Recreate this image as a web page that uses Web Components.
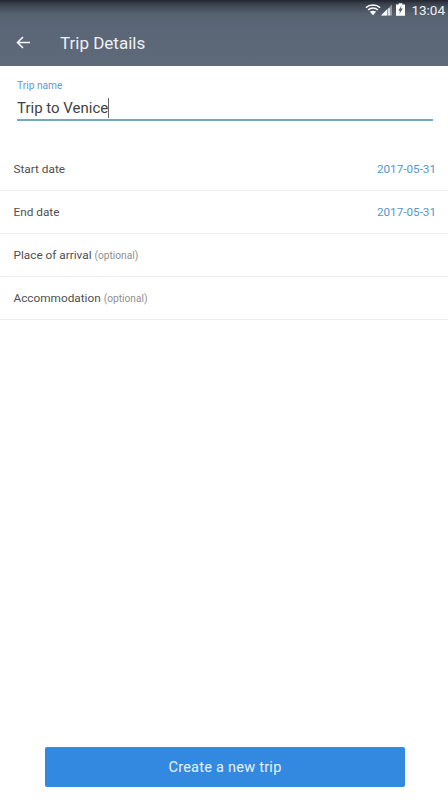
<!DOCTYPE html>
<html>
<head>
<meta charset="utf-8">
<title>Trip Details</title>
<style>
  html, body { margin: 0; padding: 0; height: 100%; }
  body { width: 448px; height: 800px; overflow: hidden; background: #fff; font-family: Roboto, "Liberation Sans", sans-serif; display: flex; flex-direction: column; }
</style>
</head>
<body>
<app-header title="Trip Details"></app-header>
<name-field label="Trip name" value="Trip to Venice"></name-field>
<detail-row label="Start date" value="2017-05-31"></detail-row>
<detail-row label="End date" value="2017-05-31"></detail-row>
<detail-row label="Place of arrival" hint="(optional)"></detail-row>
<detail-row label="Accommodation" hint="(optional)"></detail-row>
<bottom-action>Create a new trip</bottom-action>
<script>
class AppHeader extends HTMLElement {
  constructor() {
    super();
    const shadow = this.attachShadow({ mode: "open" });
    shadow.innerHTML = `
      <style>
        :host { display: block; height: 66px; flex: none; color: #fff; background: linear-gradient(#20252e 0, #3a424e 4px, #56616f 14px, #5a6675 24px, #5e6a79 66px); }
        .status { height: 19px; display: flex; justify-content: flex-end; align-items: center; padding-right: 3px; font-size: 13.500px; color: #eef1f4; }
        .status svg { display: block; }
        .status span { margin-left: 6px; }
        .bar { height: 47px; display: flex; align-items: center; }
        .back { width: 60px; display: flex; padding-left: 16px; box-sizing: border-box; }
        h1 { margin: 0; font-size: 17px; font-weight: 400; color: #eef1f5; }
      </style>
      <div class="status">
        <svg width="16" height="12" viewBox="0 0 18 13" fill="none" stroke="#fff" stroke-width="1.600"><path d="M1 3.800C5.500 0 12.500 0 17 3.800M3.400 6.400c3.300-2.600 7.900-2.600 11.200 0"/><path d="M5.500 8.500c2.100-1.400 4.900-1.400 7 0L9 12.500z" fill="#fff" stroke="none"/></svg>
        <svg width="11" height="12" viewBox="0 0 12 12"><path d="M12 0v12H0z" fill="#fff" opacity=".4"/><path d="M6.500 5.500V12H0zM8 4h1.500v8H8z" fill="#fff"/></svg>
        <svg width="9" height="13" viewBox="0 0 10 14" style="margin-left:4px"><path d="M3 0h4v1.500h3V14H0V1.500h3z" fill="#fff"/><path d="M6.200 2.600 2.500 8.400h2L3.800 12l3.800-6H5.400z" fill="#56616f"/></svg>
        <span>13:04</span>
      </div>
      <div class="bar">
        <div class="back">
          <svg width="15" height="13" viewBox="0 0 15 13" fill="none" stroke="#f4f6f8" stroke-width="1.600"><path d="M14 6.500H2M7 1 1.500 6.500 7 12"/></svg>
        </div>
        <h1></h1>
      </div>
    `;
    shadow.querySelector("h1").textContent = this.getAttribute("title");
  }
}

class NameField extends HTMLElement {
  constructor() {
    super();
    const shadow = this.attachShadow({ mode: "open" });
    shadow.innerHTML = `
      <style>
        :host { display: block; flex: none; height: 82px; padding: 13px 15px 0 17px; box-sizing: border-box; }
        .label { font-size: 10.200px; line-height: 13px; color: #5b9bd5; }
        .input { height: 24px; margin-top: 3px; font-size: 15px; line-height: 26px; color: #424242; border-bottom: 2px solid #74a8bd; }
        .caret { display: inline-block; width: 1px; height: 20px; background: #666; vertical-align: -5px; }
      </style>
      <div class="label"></div>
      <div class="input"><span class="text"></span><span class="caret"></span></div>
    `;
    shadow.querySelector(".label").textContent = this.getAttribute("label");
    shadow.querySelector(".text").textContent = this.getAttribute("value");
  }
}

class DetailRow extends HTMLElement {
  constructor() {
    super();
    const shadow = this.attachShadow({ mode: "open" });
    shadow.innerHTML = `
      <style>
        :host { display: flex; flex: none; height: 43px; padding: 0 12px 0 13.500px; box-sizing: border-box; align-items: center; justify-content: space-between; border-bottom: 1px solid #eeeeee; font-size: 11.800px; color: #505050; }
        .hint { font-size: 10.200px; color: #8f8f8f; }
        .value { color: #5596cc; font-size: 11.700px; }
      </style>
      <div><span class="label"></span> <span class="hint"></span></div>
      <div class="value"></div>
    `;
    shadow.querySelector(".label").textContent = this.getAttribute("label");
    shadow.querySelector(".hint").textContent = this.getAttribute("hint") || "";
    shadow.querySelector(".value").textContent = this.getAttribute("value") || "";
  }
}

class BottomAction extends HTMLElement {
  constructor() {
    super();
    const shadow = this.attachShadow({ mode: "open" });
    shadow.innerHTML = `
      <style>
        :host { display: flex; flex: 1; align-items: flex-end; padding: 0 43px 13px 45px; }
        button { width: 360px; height: 40px; border: 0; border-radius: 2px; padding: 0; background: #3389e0; color: #e8f2fc; font: 400 14.500px Roboto, "Liberation Sans", sans-serif; letter-spacing: .25px; }
      </style>
      <button><slot></slot></button>
    `;
  }
}

customElements.define("app-header", AppHeader);
customElements.define("name-field", NameField);
customElements.define("detail-row", DetailRow);
customElements.define("bottom-action", BottomAction);
</script>
</body>
</html>
